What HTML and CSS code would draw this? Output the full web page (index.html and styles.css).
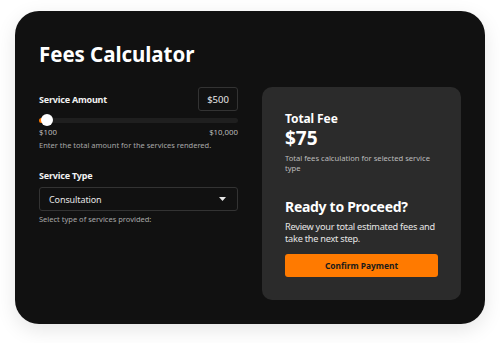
FILE: index.html
```html
<!DOCTYPE html>
<html lang="en">
<head>
<meta charset="utf-8">
<title>Fees Calculator</title>
<link rel="stylesheet" href="styles.css">
</head>
<body>
<main class="card">
  <h1 class="title">Fees Calculator</h1>
  <div class="columns">
    <section class="form">
      <div class="amount-row">
        <label class="label">Service Amount</label>
        <div class="amount-box">$500</div>
      </div>
      <div class="slider">
        <div class="track"><div class="fill"></div></div>
        <div class="thumb"></div>
      </div>
      <div class="range-labels"><span>$100</span><span>$10,000</span></div>
      <p class="hint">Enter the total amount for the services rendered.</p>

      <label class="label type-label">Service Type</label>
      <div class="select">
        <span>Consultation</span>
        <svg class="caret" width="7" height="4" viewBox="0 0 7 4"><path d="M0 0h7L3.5 4z" fill="#e6e6e6"/></svg>
      </div>
      <p class="hint">Select type of services provided:</p>
    </section>

    <aside class="panel">
      <h2 class="fee-title">Total Fee</h2>
      <div class="fee-value">$75</div>
      <p class="panel-desc">Total fees calculation for selected service type</p>
      <h2 class="proceed-title">Ready to Proceed?</h2>
      <p class="proceed-text">Review your total estimated fees and take the next step.</p>
      <button class="confirm">Confirm Payment</button>
    </aside>
  </div>
</main>
</body>
</html>
```
FILE: styles.css
```css
* { box-sizing: border-box; }
html, body { margin: 0; padding: 0; background: #ffffff; }
body {
  font-family: "Noto Sans", "Open Sans", sans-serif;
  padding: 11px 15px 19px;
}
.card {
  background: #111111;
  border-radius: 24px;
  height: 313px;
  padding: 30px 24px 24px;
  box-shadow: 0 6px 20px rgba(0,0,0,0.10);
  color: #fff;
}
.title {
  margin: 0;
  font-size: 20.5px;
  font-weight: 700;
  line-height: 26px;
  letter-spacing: -0.05px;
}
.columns {
  display: grid;
  grid-template-columns: 1fr 1fr;
  gap: 24px;
  margin-top: 20px;
  height: 213px;
}
.form { display: flex; flex-direction: column; }
.amount-row {
  display: flex;
  justify-content: space-between;
  align-items: center;
  height: 24px;
}
.label {
  font-size: 9px;
  font-weight: 700;
  color: #f2f2f2;
  letter-spacing: -0.2px;
}
.amount-box {
  width: 40px;
  height: 24px;
  border: 1px solid #333;
  border-radius: 3px;
  font-size: 9.5px;
  color: #e8e8e8;
  display: flex;
  align-items: center;
  justify-content: center;
}
.slider {
  position: relative;
  height: 12px;
  margin-top: 3px;
  display: flex;
  align-items: center;
}
.track {
  width: 100%;
  height: 5px;
  border-radius: 3px;
  background: #1f1f1f;
  overflow: hidden;
}
.fill { width: 8px; height: 100%; background: #ff7a00; }
.thumb {
  position: absolute;
  left: 2px;
  top: 0;
  width: 12px;
  height: 12px;
  border-radius: 50%;
  background: #fff;
}
.range-labels {
  display: flex;
  justify-content: space-between;
  font-size: 7.8px;
  color: #bdbdbd;
  margin-top: 1px;
  line-height: 11px;
}
.hint {
  margin: 2px 0 0;
  font-size: 7.5px;
  line-height: 11px;
  color: #a8a8a8;
}
.type-label { margin-top: 19px; line-height: 12px; }
.select {
  margin-top: 5px;
  height: 24px;
  border: 1px solid #333;
  border-radius: 3px;
  display: flex;
  align-items: center;
  justify-content: space-between;
  padding: 0 11px 0 9px;
  font-size: 9px;
  letter-spacing: -0.1px;
  color: #e6e6e6;
}
.select + .hint { margin-top: 3px; }
.panel {
  background: #2b2b2b;
  border-radius: 10px;
  padding: 24px 23px 22px;
  display: flex;
  flex-direction: column;
}
.fee-title {
  margin: 0;
  font-size: 12px;
  font-weight: 700;
  line-height: 16px;
  letter-spacing: -0.1px;
}
.fee-value {
  font-size: 19px;
  font-weight: 700;
  line-height: 22px;
  margin-top: 0;
}
.panel-desc {
  margin: 4px 0 0;
  font-size: 7.6px;
  line-height: 10px;
  color: #bdbdbd;
}
.proceed-title {
  margin: 25px 0 0;
  font-size: 14px;
  font-weight: 700;
  line-height: 18px;
  letter-spacing: -0.3px;
}
.proceed-text {
  margin: 5px 0 0;
  font-size: 9.2px;
  line-height: 12px;
  letter-spacing: -0.25px;
  color: #e6e6e6;
}
.confirm {
  margin-top: 9px;
  height: 23px;
  border: none;
  border-radius: 3px;
  background: #ff7a00;
  color: #1a1a1a;
  font-family: inherit;
  font-size: 8.4px;
  font-weight: 700;
  cursor: pointer;
}
```
